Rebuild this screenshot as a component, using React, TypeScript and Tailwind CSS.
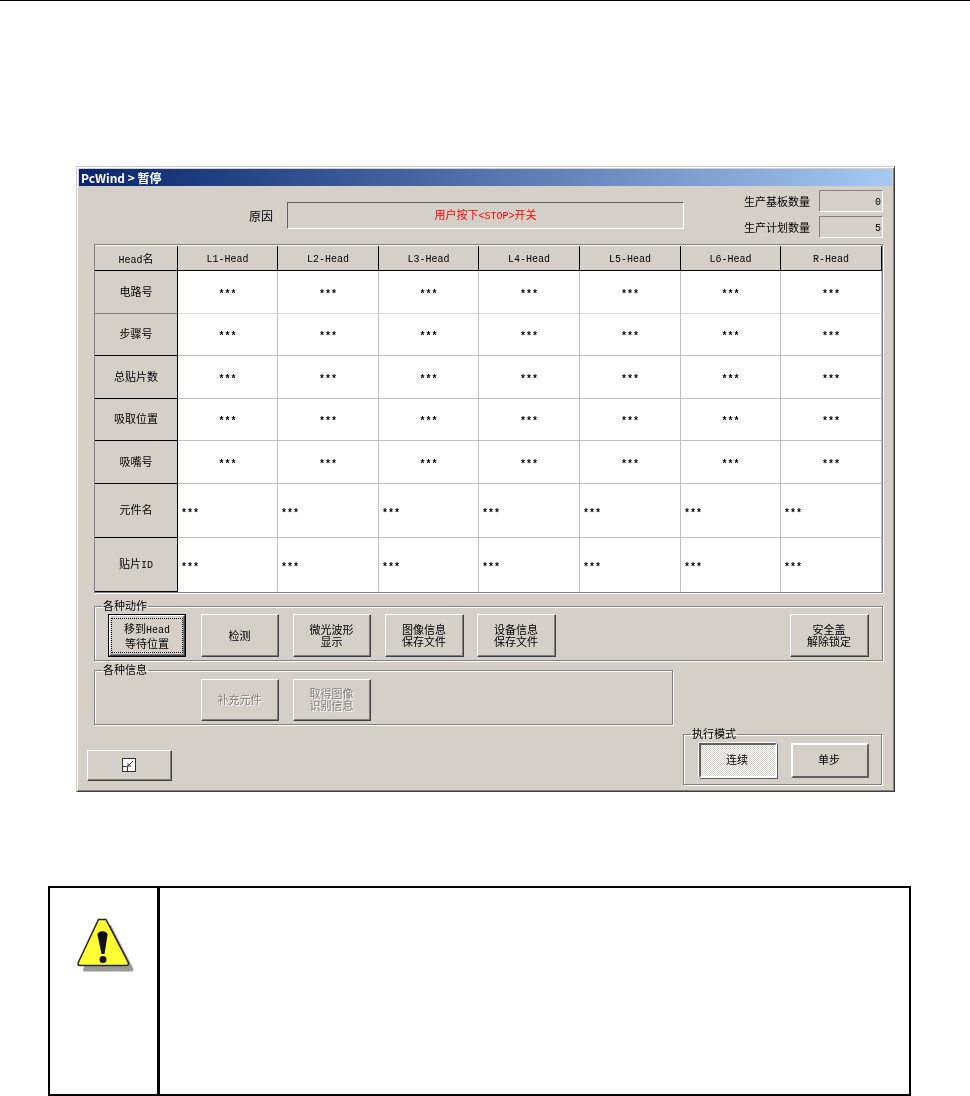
import type { ReactNode } from 'react';

const columns = ['L1', 'L2', 'L3', 'L4', 'L5', 'L6', 'R'];

const rows: { label: ReactNode; height: string; line: string; headLine: string; left?: boolean }[] = [
  { label: '电路号', height: 'h-[43px]', line: 'border-[#d8d8d8]', headLine: 'border-[#808080]' },
  { label: '步骤号', height: 'h-[42px]', line: 'border-[#c0c0c0]', headLine: 'border-black' },
  { label: '总贴片数', height: 'h-[43px]', line: 'border-[#c0c0c0]', headLine: 'border-black' },
  { label: '吸取位置', height: 'h-[42px]', line: 'border-[#c0c0c0]', headLine: 'border-black' },
  { label: '吸嘴号', height: 'h-[43px]', line: 'border-[#c0c0c0]', headLine: 'border-black' },
  { label: '元件名', height: 'h-[54px]', line: 'border-[#c0c0c0]', headLine: 'border-black', left: true },
  { label: <>贴片<Latin>ID</Latin></>, height: 'h-[54px]', line: 'border-transparent', headLine: 'border-black', left: true },
];

function Latin({ children }: { children: ReactNode }) {
  return <span className="font-['Liberation_Mono'] text-[10px]">{children}</span>;
}

function Btn({
  children,
  className,
  disabled,
}: {
  children: ReactNode;
  className: string;
  disabled?: boolean;
}) {
  return (
    <div
      className={`flex items-center justify-center border border-t-white border-l-white border-r-[#404040] border-b-[#404040] pb-[2px] pr-px text-center leading-[12px] shadow-[inset_-1px_-1px_0_#808080] ${
        disabled ? 'text-[#808080] [text-shadow:1px_1px_0_#fff]' : 'text-black'
      } ${className}`}
    >
      <div>{children}</div>
    </div>
  );
}

function Group({ title, className, children }: { title: string; className: string; children: ReactNode }) {
  return (
    <fieldset className={`m-0 border border-[#808080] p-0 shadow-[1px_1px_0_#fff,inset_1px_1px_0_#fff] ${className}`}>
      <legend className="ml-[7px] px-px pb-[2px] text-[11px] leading-[10px] text-black">{title}</legend>
      {children}
    </fieldset>
  );
}

function Field({ value }: { value: string }) {
  return (
    <div className="h-[22px] w-[64px] border border-t-[#808080] border-l-[#808080] border-r-white border-b-white pr-px text-right leading-[18px]">
      <Latin>{value}</Latin>
    </div>
  );
}

export default function App() {
  return (
    <div className="h-[1096px] w-[970px] overflow-hidden bg-white font-['Noto_Sans_CJK_SC',sans-serif] text-[11px] text-black [will-change:transform]">
      <div className="h-px bg-black" />

      {/* Dialog */}
      <div className="ml-[76px] mt-[165px] h-[626px] w-[819px] border border-[#d4d0c8] border-r-[#404040] border-b-[#404040] bg-[#d4d0c8] p-[2px] shadow-[inset_1px_1px_0_#fff,inset_-1px_-1px_0_#808080]">
        <div className="flex h-[17px] items-center bg-gradient-to-r from-[#0a246a] to-[#a6caf0] pl-[2px] text-[12px] font-bold leading-[17px] text-white">
          PcWind &gt; 暂停
        </div>

        {/* Reason and counters */}
        <div className="flex h-[58px] items-start">
          <div className="ml-[170px] mt-[16px] text-[12px] leading-[27px]">原因</div>
          <div className="ml-[14px] mt-[16px] flex h-[27px] w-[397px] items-center justify-center border border-t-[#606060] border-l-[#606060] border-r-white border-b-white leading-[25px] text-[#ff0000]">
            <span>用户按下<Latin>&lt;STOP&gt;</Latin>开关</span>
          </div>
          <div className="ml-auto mr-[9px] mt-[4px] flex flex-col gap-[4px]">
            <div className="flex items-center gap-[9px] leading-[20px]">
              生产基板数量 <Field value="0" />
            </div>
            <div className="flex items-center gap-[9px] leading-[20px]">
              生产计划数量 <Field value="5" />
            </div>
          </div>
        </div>

        <div className="pl-[15px] pr-[10px]">
          {/* Head table */}
          <div className="h-[349px] w-[789px] border border-[#808080] bg-white py-px shadow-[1px_1px_0_#fff]">
            <div className="grid grid-cols-[83px_100px_101px_100px_101px_101px_100px_101px]">
              <div className="flex h-[25px] items-center justify-center border-r border-b border-black bg-[#d4d0c8] pt-px">
                <span><Latin>Head</Latin>名</span>
              </div>
              {columns.map((c) => (
                <div key={c} className="flex h-[25px] items-center justify-center border-r border-b border-black bg-[#d4d0c8] pt-[2px]">
                  <Latin>{c}-Head</Latin>
                </div>
              ))}
              {rows.map((row, i) => (
                <div key={i} className="contents">
                  <div
                    className={`flex ${row.height} items-center justify-center border-r border-b border-r-black ${row.headLine} bg-[#d4d0c8] pb-[2px] text-[11px]`}
                  >
                    <span>{row.label}</span>
                  </div>
                  {columns.map((c) => (
                    <div
                      key={c}
                      className={`flex ${row.height} items-center border-r border-b border-r-[#c0c0c0] ${row.line} font-bold ${
                        row.left ? 'justify-start pl-[3px] pt-[6px]' : 'justify-center pt-[4px]'
                      }`}
                    >
                      <Latin>***</Latin>
                    </div>
                  ))}
                </div>
              ))}
            </div>
          </div>

          <Group title="各种动作" className="mt-[7px] w-[789px]">
            <div className="flex pb-[3px] pl-[13px] pr-[13px] pt-[2px]">
              {/* focused button */}
              <div className="h-[43px] w-[78px] border border-black">
                <div className="flex h-full w-full items-center justify-center border border-t-white border-l-white border-r-[#404040] border-b-[#404040] text-center leading-[12px] shadow-[inset_-1px_-1px_0_#808080]">
                  <div className="flex h-[35px] w-[72px] items-center justify-center border border-dotted border-black">
                    <div>
                      移到<Latin>Head</Latin>
                      <br />
                      等待位置
                    </div>
                  </div>
                </div>
              </div>
              <Btn className="ml-[15px] h-[43px] w-[78px]">检测</Btn>
              <Btn className="ml-[14px] h-[43px] w-[78px]">
                微光波形
                <br />
                显示
              </Btn>
              <Btn className="ml-[14px] h-[43px] w-[79px]">
                图像信息
                <br />
                保存文件
              </Btn>
              <Btn className="ml-[13px] h-[43px] w-[79px]">
                设备信息
                <br />
                保存文件
              </Btn>
              <Btn className="ml-auto h-[43px] w-[79px]">
                安全盖
                <br />
                解除锁定
              </Btn>
            </div>
          </Group>

          <Group title="各种信息" className="mt-[3px] w-[579px]">
            <div className="flex gap-[14px] pb-[3px] pl-[106px] pt-[3px]">
              <Btn disabled className="h-[42px] w-[78px]">
                补充元件
              </Btn>
              <Btn disabled className="h-[42px] w-[78px]">
                取得图像
                <br />
                识别信息
              </Btn>
            </div>
          </Group>
        </div>

        {/* Bottom row */}
        <div className="mt-[3px] flex items-end pl-[8px] pr-[10px]">
          <Btn className="mb-[4px] h-[31px] w-[85px]">
            <svg width="14" height="14" viewBox="0 0 14 14" className="block">
              <rect x="0.5" y="0.5" width="13" height="13" fill="#fff" stroke="#333" />
              <path d="M0.5 8.5H5.5V13.5" fill="none" stroke="#333" />
              <path d="M11 3L6 8M6 5V8H9" fill="none" stroke="#333" />
            </svg>
          </Btn>
          <Group title="执行模式" className="ml-auto w-[199px]">
            <div className="flex gap-[14px] pb-[6px] pl-[15px] pt-[3px]">
              <div className="flex h-[35px] w-[78px] items-center justify-center border-2 border-t-[#606060] border-l-[#606060] border-r-white border-b-white bg-[repeating-conic-gradient(#fff_0_25%,#d4d0c8_0_50%)] bg-[length:2px_2px] pb-[2px] pr-[2px] shadow-[1px_1px_0_#606060,-1px_-1px_0_#fff]">
                连续
              </div>
              <div className="flex h-[35px] w-[78px] items-center justify-center border-2 border-t-white border-l-white border-r-[#606060] border-b-[#606060] pb-[2px] pr-[2px]">
                单步
              </div>
            </div>
          </Group>
        </div>
      </div>

      {/* Warning box */}
      <div className="ml-[48px] mt-[94px] flex h-[210px] w-[863px] border-2 border-black">
        <div className="w-[110px] border-r-[3px] border-black pl-[27px] pt-[30px]">
          <svg width="58" height="56" viewBox="0 0 58 56" className="block">
            <path d="M26.5 7H34L56 50Q57.5 53.5 54 53.5H8Q5 53.5 6.5 50Z" fill="#999" />
            <path
              d="M21.5 1.5H29L51 44Q52.5 47.5 49 47.5H3Q0 47.5 1.5 44Z"
              fill="#ffff33"
              stroke="#222"
              strokeWidth="1.5"
            />
            <path d="M20.5 17C20.5 12 30.5 12 30.5 17L27.5 36H24.5Z" fill="#111" />
            <circle cx="26" cy="41.5" r="3.5" fill="#111" />
          </svg>
        </div>
        <div className="flex-1" />
      </div>
    </div>
  );
}
